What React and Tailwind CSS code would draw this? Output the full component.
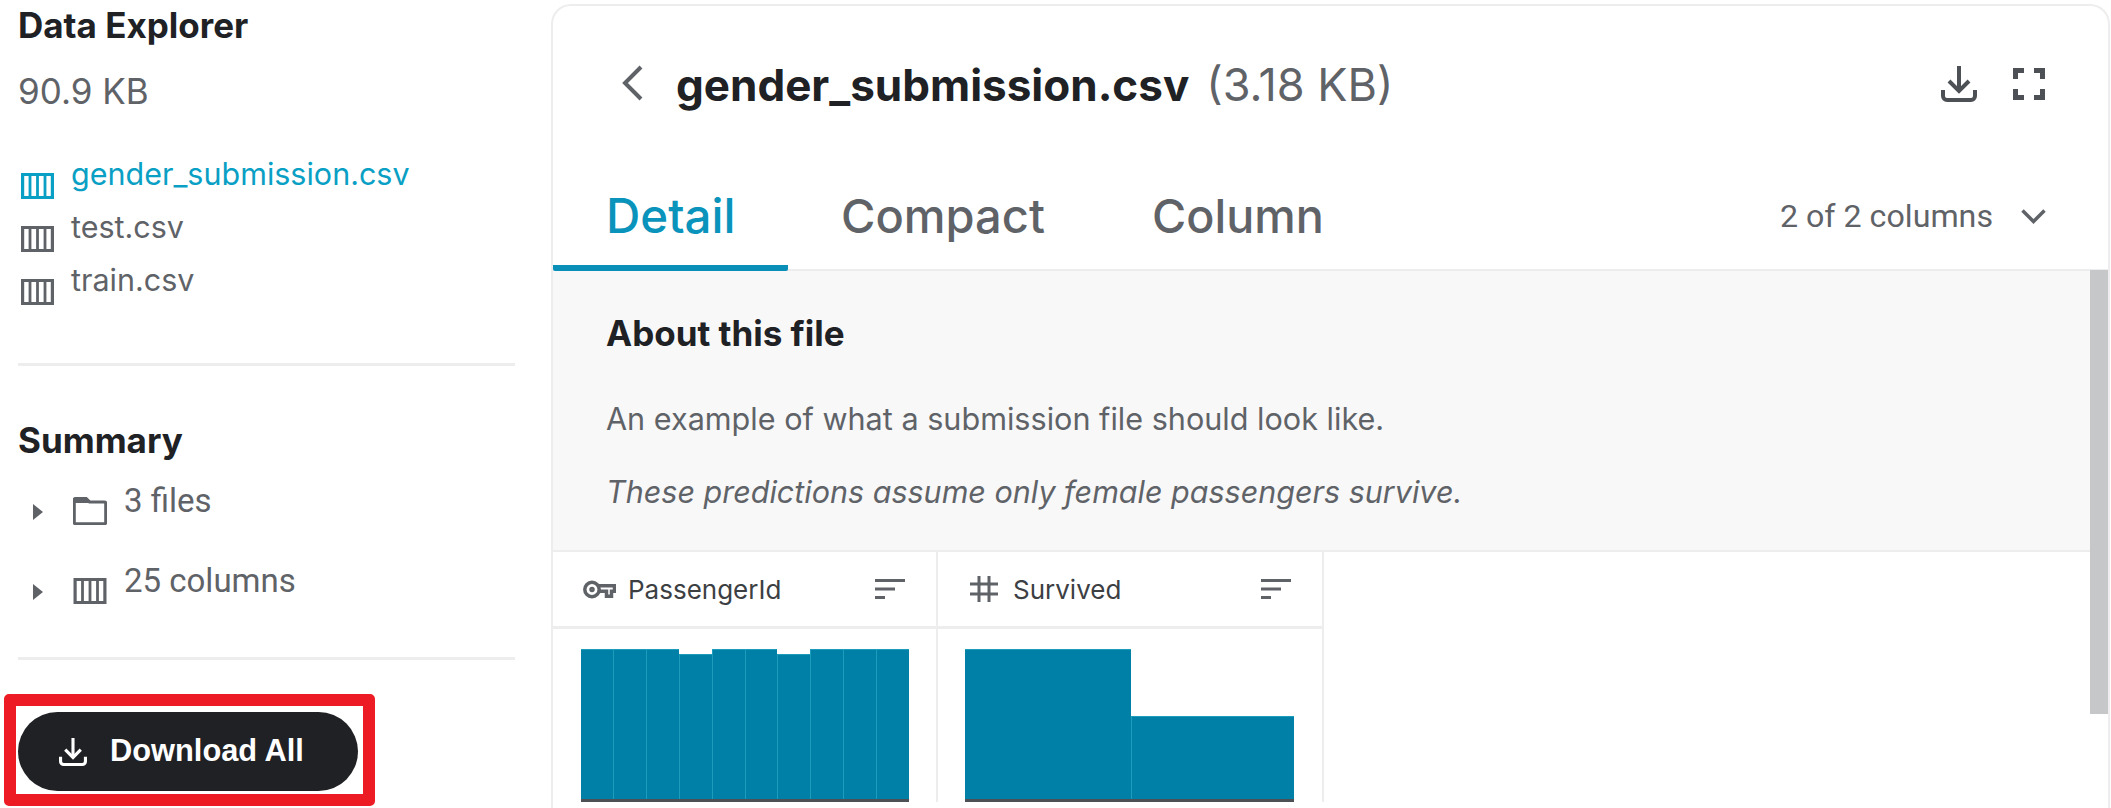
import React from 'react';

const ColumnsIcon = ({ className }) => (
  <svg className={className} viewBox="0 0 33 27" fill="none" stroke="currentColor" strokeWidth="3.2">
    <path d="M1.600 2.500h29.800v23H1.600z" />
    <path d="M9 3v22M16.500 3v22M24 3v22" strokeWidth="2.800" />
  </svg>
);

const FolderIcon = ({ className }) => (
  <svg className={className} viewBox="0 0 34 28" fill="none">
    <path
      d="M3 1.500h10l3.500 3.500H31a1.800 1.800 0 0 1 1.800 1.800V25a1.800 1.800 0 0 1-1.800 1.800H3A1.800 1.800 0 0 1 1.200 25V3.300A1.800 1.800 0 0 1 3 1.500z"
      stroke="currentColor"
      strokeWidth="3.200"
    />
    <path d="M2 2h10.500L16 6h-14z" fill="currentColor" />
  </svg>
);

const DownloadIcon = ({ className }) => (
  <svg className={className} viewBox="0 0 36 36" fill="none" stroke="currentColor" strokeWidth="4">
    <path d="M18 0v24" />
    <path d="M8 15l10 10 10-10" />
    <path d="M2 24v6a4 4 0 0 0 4 4h24a4 4 0 0 0 4-4v-6" />
  </svg>
);

const SortIcon = ({ className }) => (
  <svg className={className} viewBox="0 0 30 20" fill="currentColor">
    <path d="M0 0h30v3H0zM0 8.500h20v3H0zM0 17h10v3H0z" />
  </svg>
);

const Triangle = () => (
  <svg className="w-[10px] h-[16px] text-[#5f6368] shrink-0" viewBox="0 0 10 16" fill="currentColor">
    <path d="M0 0l10 8-10 8z" />
  </svg>
);

const Bar = ({ height, className }) => (
  <div className={`bg-[#007fa7] border-l border-t border-[#1d9dbb] first:border-l-0 ${className}`} style={{ height }} />
);

const passengerBars = [150, 150, 150, 145, 150, 150, 145, 150, 150, 150];

export default function App() {
  return (
    <div className="h-[808px] w-[2111px] overflow-hidden flex bg-white text-[#202124] font-['Inter','Liberation_Sans',sans-serif]">
      <aside className="w-[551px] shrink-0 pl-[18px]">
        <h2 className="text-[35px] leading-[40px] font-bold mt-[5px]">Data Explorer</h2>
        <p className="text-[35px] leading-[40px] text-[#5f6368] mt-[26px]">90.9 KB</p>

        <ul className="mt-[46px] text-[30.5px]">
          <li className="flex h-[53px] text-[#0a9fc4]">
            <ColumnsIcon className="w-[33px] h-[27px] ml-[3px] mt-[15px] shrink-0" />
            <span className="ml-[17px] leading-[40px] mt-[-3px]">gender_submission.csv</span>
          </li>
          <li className="flex h-[53px] text-[#5f6368]">
            <ColumnsIcon className="w-[33px] h-[27px] ml-[3px] mt-[15px] shrink-0" />
            <span className="ml-[17px] leading-[40px] mt-[-3px]">test.csv</span>
          </li>
          <li className="flex h-[53px] text-[#5f6368]">
            <ColumnsIcon className="w-[33px] h-[27px] ml-[3px] mt-[15px] shrink-0" />
            <span className="ml-[17px] leading-[40px] mt-[-3px]">train.csv</span>
          </li>
        </ul>

        <div className="w-[497px] h-[3px] bg-[#ededed] mt-[47px]" />

        <h2 className="text-[35px] leading-[40px] font-bold mt-[54px]">Summary</h2>
        <div className="mt-[23px] text-[33px] text-[#5f6368] font-['Roboto',sans-serif]">
          <div className="flex h-[80px]">
            <div className="ml-[15px] mt-[21px]"><Triangle /></div>
            <FolderIcon className="w-[34px] h-[28px] ml-[30px] mt-[14px] shrink-0" />
            <span className="ml-[17px] leading-[40px] mt-[-2px]">3 files</span>
          </div>
          <div className="flex h-[80px]">
            <div className="ml-[15px] mt-[21px]"><Triangle /></div>
            <ColumnsIcon className="w-[34px] h-[27px] ml-[30px] mt-[14px] shrink-0" />
            <span className="ml-[17px] leading-[40px] mt-[-2px]">25 columns</span>
          </div>
        </div>

        <div className="w-[497px] h-[3px] bg-[#ededed] mt-[14px]" />

        <div className="-ml-[14px] mt-[34px] w-[371px] h-[112px] border-[12px] border-[#ed1c24] rounded-[5px] flex items-center pl-[2px]">
          <button className="w-[340px] h-[79px] mt-[3px] rounded-full bg-[#202124] text-white flex items-center pl-[41px]">
            <DownloadIcon className="w-[28px] h-[28px] shrink-0" />
            <span className="ml-[23px] text-[30.800px] font-bold font-['Liberation_Sans',sans-serif]">Download All</span>
          </button>
        </div>
      </aside>

      <main className="relative flex-1 mt-[4px] mr-[1px] border-2 border-b-0 border-[#ededed] rounded-t-[20px] overflow-hidden">
        <header className="h-[170px] flex items-start pl-[68px] pr-[63px]">
          <svg className="w-[22px] h-[36px] mt-[59px] text-[#5f6368] shrink-0" viewBox="0 0 22 36" fill="none" stroke="currentColor" strokeWidth="4">
            <path d="M20 2L4 18l16 16" />
          </svg>
          <h1 className="ml-[33px] mt-[52px] text-[44px] leading-[54px] font-bold">gender_submission.csv</h1>
          <span className="ml-[17px] mt-[52px] text-[45px] leading-[54px] text-[#5f6368]">(3.18 KB)</span>
          <DownloadIcon className="w-[36px] h-[36px] mt-[60px] ml-auto text-[#4d5156] shrink-0" />
          <svg className="w-[32px] h-[32px] ml-[36px] mt-[62px] text-[#4d5156] shrink-0" viewBox="0 0 32 32" fill="none" stroke="currentColor" strokeWidth="5">
            <path d="M2.500 11V2.500H11M21 2.500h8.500V11M29.500 21v8.500H21M11 29.500H2.500V21" />
          </svg>
        </header>

        <nav className="h-[95px] flex items-start border-b-2 border-[#ededed] relative">
          <div className="w-[235px] h-[95px] border-b-[6px] border-[#0a8fb8] rounded-b-[2px] text-[#0a93bb] text-[47.500px] leading-[56px] pl-[53px] pt-[12px] font-medium">Detail</div>
          <span className="ml-[53px] mt-[12px] text-[47px] leading-[56px] text-[#5f6368] font-medium">Compact</span>
          <span className="ml-[107px] mt-[12px] text-[46.700px] leading-[56px] text-[#5f6368] font-medium">Column</span>
          <span className="ml-auto mt-[20px] text-[32.200px] leading-[40px] text-[#5f6368] font-['Roboto',sans-serif]">2 of 2 columns</span>
          <svg className="w-[25px] h-[15px] ml-[28px] mr-[62px] mt-[33px] text-[#5f6368] shrink-0" viewBox="0 0 25 15" fill="none" stroke="currentColor" strokeWidth="3.500">
            <path d="M1.500 1.500l11 11 11-11" />
          </svg>
        </nav>

        <section className="h-[281px] bg-[#f8f8f8] border-b-2 border-[#ededed] pl-[53px]">
          <h3 className="text-[35px] leading-[40px] font-bold translate-y-[42px]">About this file</h3>
          <p className="text-[30.600px] leading-[40px] text-[#5f6368] mt-[88px]">An example of what a submission file should look like.</p>
          <p className="text-[30.500px] leading-[40px] text-[#5f6368] italic mt-[33px]">These predictions assume only female passengers survive.</p>
        </section>

        <div className="flex">
          <div className="w-[385px] border-r-2 border-[#ededed]">
            <div className="h-[77px] border-b-[3px] border-[#ededed] flex items-center pl-[30px] pr-[31px] text-[#5f6368]">
              <svg className="w-[33px] h-[19px] shrink-0" viewBox="0 0 33 19" fill="none" stroke="currentColor" strokeWidth="3.500">
                <circle cx="9" cy="9.500" r="7.200" />
                <circle cx="9" cy="9.500" r="1.500" strokeWidth="2.500" />
                <path d="M16 5.800h15.500v5.400h-3v5h-5v-5h-7" />
              </svg>
              <span className="ml-[12px] text-[26px] text-[#3c4043] mt-[1px]">PassengerId</span>
              <SortIcon className="w-[30px] h-[20px] ml-auto" />
            </div>
            <div className="pl-[28px] pr-[27px] pt-[20px]">
              <div className="flex items-end h-[150px]">
                {passengerBars.map((h, i) => (
                  <Bar key={i} height={h} className="flex-1" />
                ))}
              </div>
              <div className="h-[3px] bg-[#4d5156]" />
            </div>
          </div>
          <div className="w-[386px] border-r-2 border-[#ededed]">
            <div className="h-[77px] border-b-[3px] border-[#ededed] flex items-center pl-[32px] pr-[31px] text-[#5f6368]">
              <svg className="w-[28px] h-[26px] shrink-0" viewBox="0 0 28 26" fill="none" stroke="currentColor" strokeWidth="3">
                <path d="M9 0v26M19 0v26M0 8h28M0 18h28" />
              </svg>
              <span className="ml-[15px] text-[26px] text-[#3c4043] mt-[1px]">Survived</span>
              <SortIcon className="w-[30px] h-[20px] ml-auto" />
            </div>
            <div className="pl-[27px] pr-[28px] pt-[20px]">
              <div className="flex items-end h-[150px]">
                <Bar height={150} className="w-[166px]" />
                <Bar height={83} className="flex-1" />
              </div>
              <div className="h-[3px] bg-[#4d5156]" />
            </div>
          </div>
        </div>

        <div className="absolute right-0 top-[264px] w-[18px] h-[444px] bg-[#c6c7c8]" />
      </main>
    </div>
  );
}
